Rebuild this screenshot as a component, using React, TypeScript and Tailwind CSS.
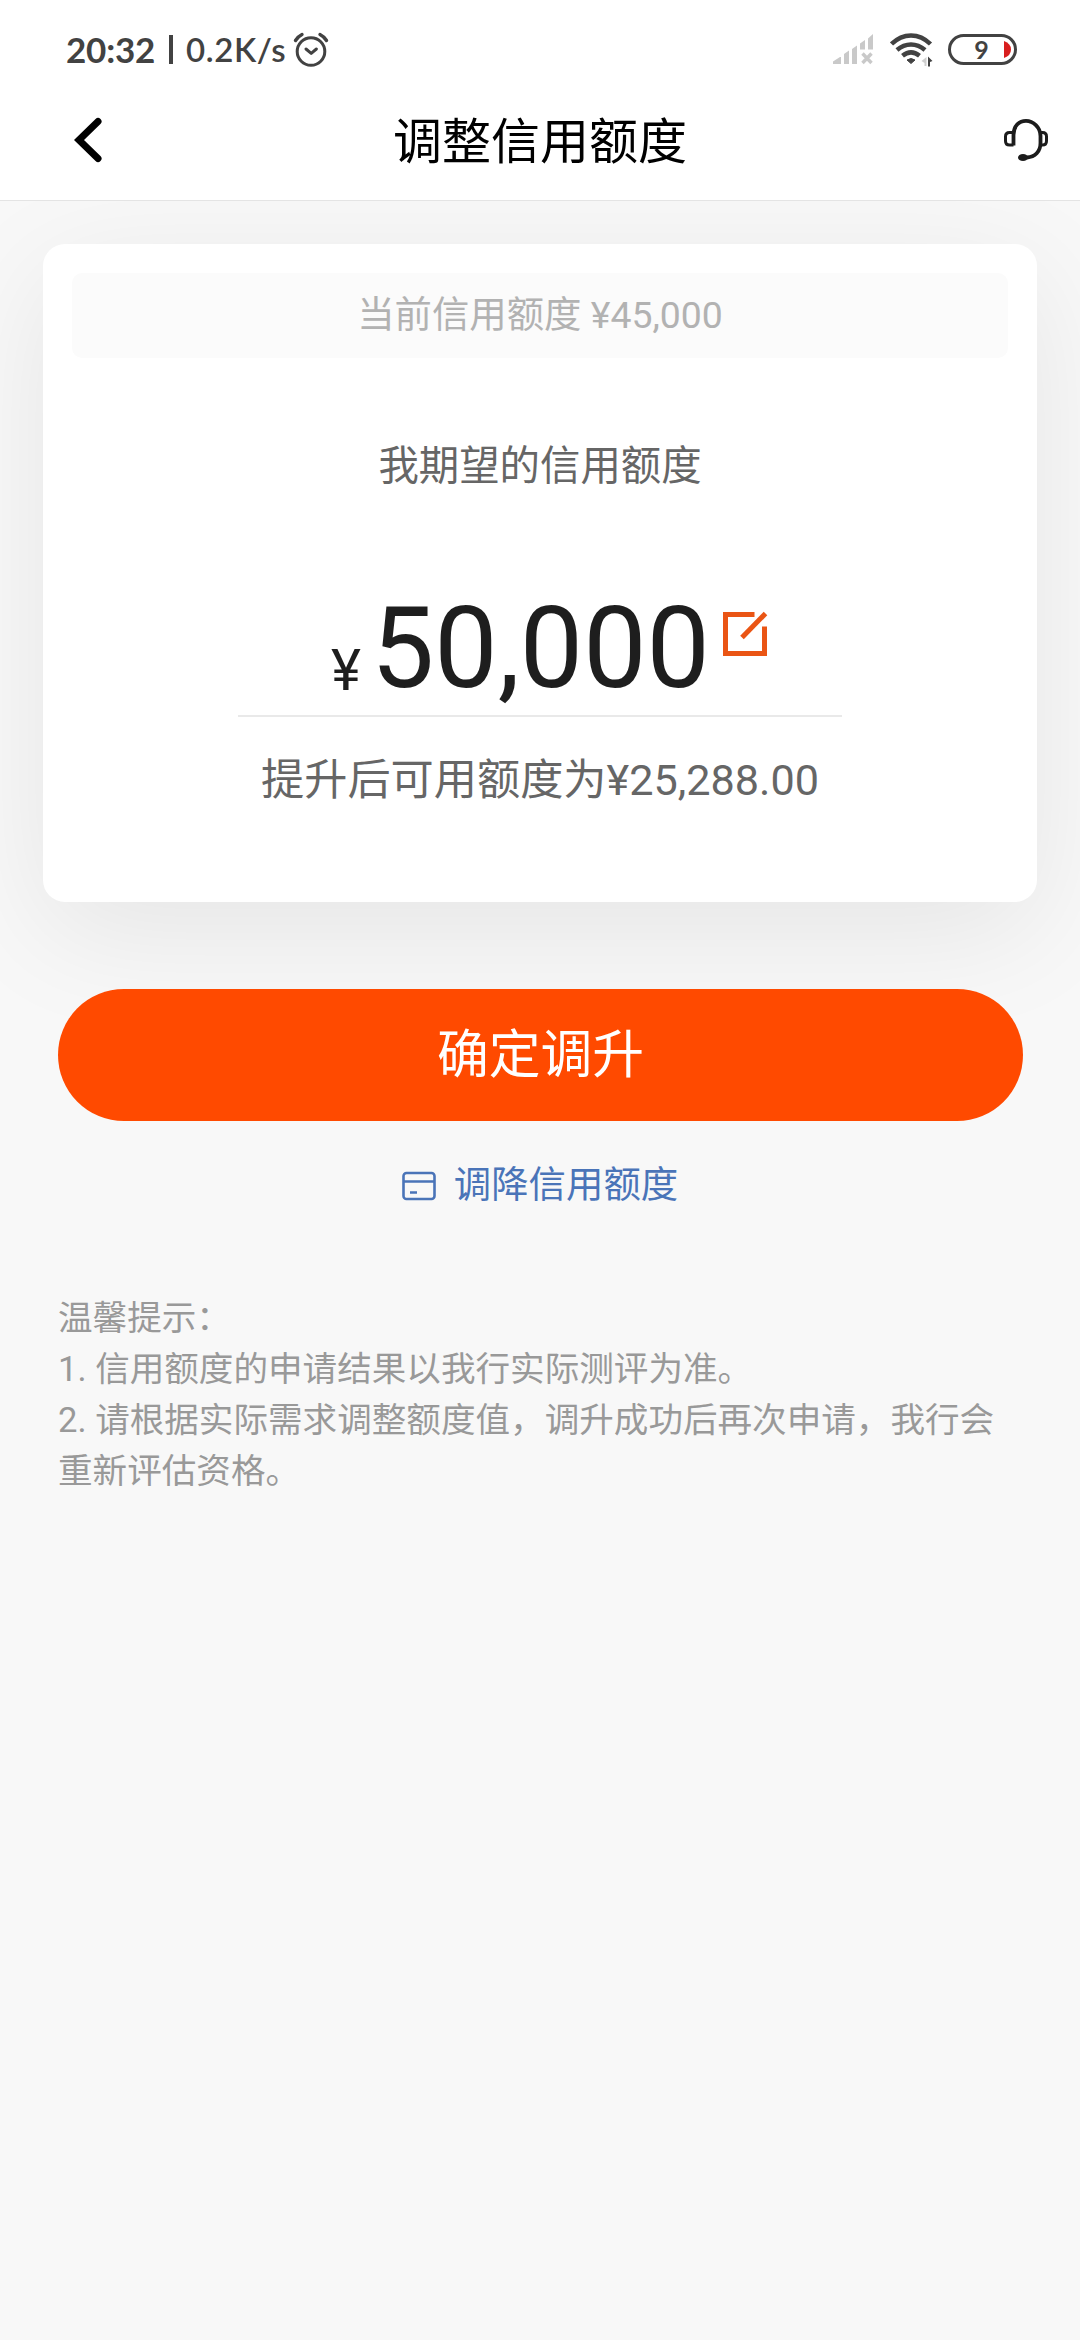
import React from 'react';

const tips = [
  '温馨提示：',
  '1. 信用额度的申请结果以我行实际测评为准。',
  '2. 请根据实际需求调整额度值，调升成功后再次申请，我行会重新评估资格。',
];

const AlarmIcon: React.FC = () => (
  <svg className="ml-[7px] h-9 w-[36px]" viewBox="0 0 36 36" fill="none" stroke="#424242" strokeLinecap="round">
    <circle cx="18" cy="19.5" r="13.8" strokeWidth="3" />
    <path d="M13 17l5.2 4.4 5.2-4.4" strokeWidth="3" strokeLinejoin="round" />
    <path d="M2.5 8.5q2.5-4 6.5-6M33.5 8.5q-2.5-4-6.5-6" strokeWidth="3.4" />
  </svg>
);

const SignalIcon: React.FC = () => (
  <svg className="h-[31px] w-[41px]" viewBox="0 0 41 31" fill="#c9c9c9">
    <path d="M0 30v-2.5l7-4.5h1v7zM11 30v-10l5-3.5v13.5zM19 30v-15l5-3.5v18.5zM27 15.500v-6l5-3.500v9.500zM35 15.500v-11l5-4.500v15.500z" />
    <path d="M29.500 19.500l9 9.500m0-9.500l-9 9.500" stroke="#c9c9c9" strokeWidth="3.400" />
  </svg>
);

const WifiIcon: React.FC = () => (
  <svg className="ml-[16px] h-[34px] w-[43px]" viewBox="0 0 43 34" fill="none" stroke="#424242" strokeWidth="4.500">
    <path d="M1.500 11C13-.5 29-.5 40.500 11" />
    <path d="M7 17c8.500-7.500 19.500-7.500 28 0" />
    <path d="M12.500 22.800c5.500-4.500 11.500-4.500 17 0" />
    <path d="M17 27q4-3 8 0l-4 3.500z" fill="#424242" strokeWidth="1" />
    <path d="M36.500 24v9h-2v-3l-3-2z" fill="#cfcfcf" stroke="none" />
    <path d="M38 23.500l4.500 4.500-2.500 1v4.500h-2z" fill="#424242" stroke="none" />
  </svg>
);

const BatteryIcon: React.FC = () => (
  <div className="relative ml-[15px] flex h-[31px] w-[69px] items-center justify-center rounded-full border-3 border-[#424242]">
    <span className="-ml-[2px] font-[Lato] text-[25px] leading-none font-bold text-[#424242]">9</span>
    <svg className="absolute top-[4px] right-[3px] h-[17px] w-[7px]" viewBox="0 0 7 17" fill="#d81e1e">
      <path d="M0 0q7 2.500 7 8.500T0 17z" />
    </svg>
  </div>
);

const HeadsetIcon: React.FC = () => (
  <svg className="h-11 w-[46px]" viewBox="0 0 46 44" fill="none" stroke="#1c1c1c">
    <path d="M10.500 27.500V17C10.500 8 16 2.800 23 2.800S37.500 9 37.500 18v7c0 8.500-5.500 14-13.500 14.500" strokeWidth="3.800" />
    <path d="M10.500 14.500H6.500q-4 0-4 4v4.500q0 4 4 4h4M37.500 14.500h2q4 0 4 4v4.500q0 4-4 4h-2" strokeWidth="3" />
    <ellipse cx="20" cy="39.500" rx="5" ry="3.600" fill="#1c1c1c" stroke="none" />
  </svg>
);

const StatusBar: React.FC = () => (
  <div className="flex h-[84px] items-center justify-between pt-[15px] pr-[63px] pl-[66px]">
    <div className="flex items-center font-[Lato] text-[#424242]">
      <span className="w-[92px] text-[35px] leading-none font-bold tracking-[-0.2px] whitespace-nowrap">20:32</span>
      <span className="ml-[11px] h-[29px] w-[4px] bg-[#424242]" />
      <span className="ml-[13px] w-[100px] text-[33px] leading-none font-semibold tracking-[0.6px] whitespace-nowrap">0.2K/s</span>
      <AlarmIcon />
    </div>
    <div className="flex items-center">
      <SignalIcon />
      <WifiIcon />
      <BatteryIcon />
    </div>
  </div>
);

const NavBar: React.FC = () => (
  <div className="grid h-[116px] grid-cols-3 items-center pr-[31px] pb-[4px] pl-[74px]">
    <svg className="h-[46px] w-[30px]" viewBox="0 0 30 46" fill="none" stroke="#000" strokeWidth="7" strokeLinecap="round">
      <path d="M24 4.500L5 23l19 18.500" />
    </svg>
    <h1 className="mt-[5px] -ml-[43px] text-center text-[49px] leading-none whitespace-nowrap text-black">调整信用额度</h1>
    <div className="flex justify-end">
      <HeadsetIcon />
    </div>
  </div>
);

const LimitCard: React.FC = () => (
  <section className="mx-[43px] mt-[43px] flex h-[658px] flex-col items-center rounded-[22px] bg-white px-[29px] pt-[29px] shadow-[0_30px_120px_rgba(0,0,0,0.08)]">
    <div className="flex h-[85px] w-full items-center justify-center rounded-[10px] bg-[#fbfbfb] text-[37.4px] leading-none text-[#b2b2b2]">
      当前信用额度 ¥45,000
    </div>
    <p className="mt-[84px] text-[40.4px] leading-[50px] text-[#666]">我期望的信用额度</p>
    <div className="mt-[91px] flex h-[134px] w-[604px] border-b-2 border-[#e9e9e9] pl-[93px] text-[#1e1e1e]">
      <span className="mt-[54px] w-[32px] text-[57px] leading-[67px]">¥</span>
      <span className="ml-[8px] text-[112.7px] leading-[132px]">50,000</span>
      <svg className="mt-[28px] ml-[12px] h-[46px] w-[46px]" viewBox="0 0 46 46" fill="none" stroke="#ea5514" strokeWidth="5">
        <path d="M32.500 3.500H3.500v39h39V15.500" />
        <path d="M20 26.500L43.500 2.500" />
      </svg>
    </div>
    <p className="mt-[37px] text-[43.2px] leading-[54px] whitespace-nowrap text-[#666]">提升后可用额度为¥25,288.00</p>
  </section>
);

const App: React.FC = () => {
  return (
    <div className="min-h-[2340px] w-[1080px] overflow-hidden bg-[#f8f8f8] font-[Roboto,'Noto_Sans_CJK_SC',sans-serif]">
      <header className="relative border-b border-[#e4e4e4] bg-white">
        <StatusBar />
        <NavBar />
      </header>

      <main>
        <LimitCard />

        <button className="relative mx-[58px] mt-[87px] flex h-[132px] w-[965px] items-center justify-center rounded-full bg-[#ff4a00] pt-[2px] text-[51.8px] leading-none text-white">
          确定调升
        </button>

        <a className="mt-[37px] flex items-center justify-center text-[37.4px] leading-[54px] text-[#4a74b8]">
          <svg className="mt-[2px] mr-[18px] h-[30px] w-[34px]" viewBox="0 0 34 30" fill="none" stroke="#4a74b8" strokeWidth="2.600">
            <rect x="1.500" y="2" width="31" height="26" rx="3" />
            <path d="M2 10.500h30M8 21.500h7" />
          </svg>
          调降信用额度
        </a>

        <div className="mt-[81px] pr-[58px] pl-[58px] text-[34.6px] leading-[51px] text-[#999]">
          {tips.map((tip) => (
            <p key={tip}>{tip}</p>
          ))}
        </div>
      </main>
    </div>
  );
};

export default App;
